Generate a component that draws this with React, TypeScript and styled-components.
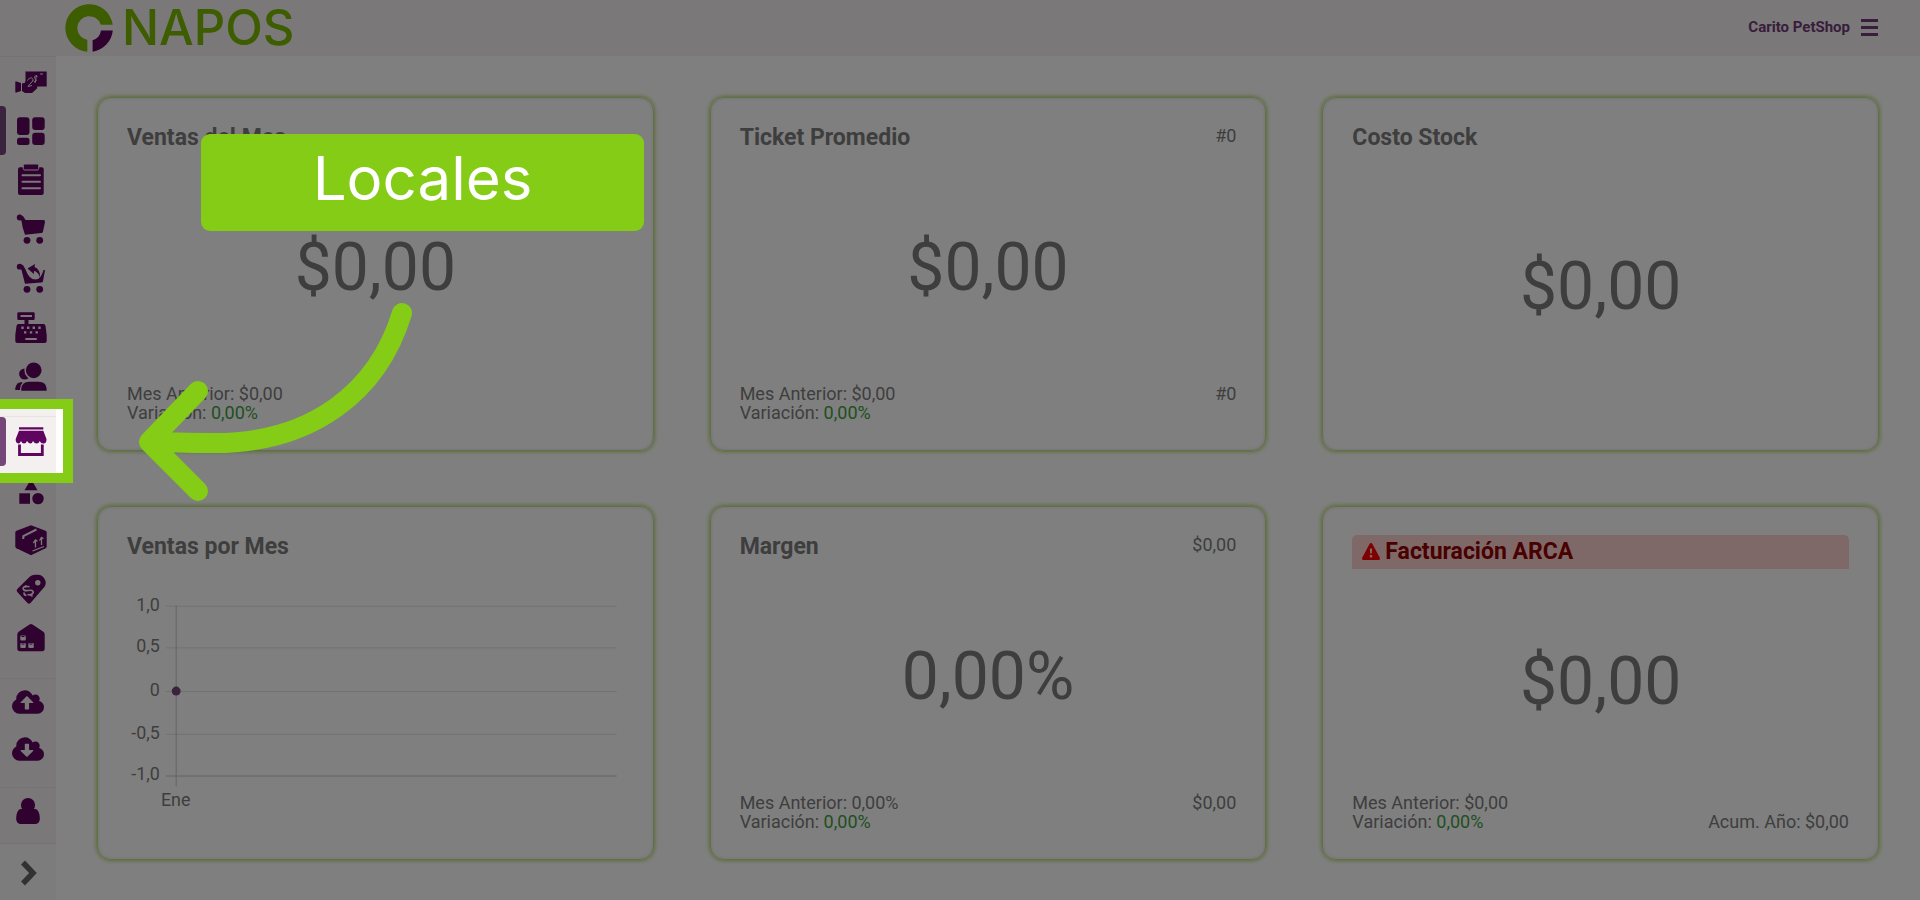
import React from "react";
import styled, { createGlobalStyle } from "styled-components";

const purple = "#5f0560";
const panel = "#f4f0f0";
const lime = "#84cc16";

const GlobalStyle = createGlobalStyle`
  * { box-sizing: border-box; }
  body { margin: 0; background: #fff; font-family: Roboto, "Open Sans", sans-serif; color: #7c7c7c; overflow-x: hidden; }
  h2, p { margin: 0; }
`;

const Page = styled.div`
  position: relative;
  display: flex;
  flex-direction: column;
  min-height: 100vh;
`;

const TopBar = styled.header`
  display: flex;
  align-items: center;
  justify-content: space-between;
  height: 56px;
  padding: 0 42px 0 64px;
  background: ${panel};
`;

const Brand = styled.a`
  display: flex;
  align-items: center;
  gap: 8px;
  color: #7cb800;
  font: 500 49px/56px Inter, sans-serif;
  text-decoration: none;
`;

const Account = styled.div`
  display: flex;
  align-items: center;
  gap: 11px;
  padding-bottom: 2px;
  color: #703c78;
  font-size: 15px;
  font-weight: 700;
`;

const IconButton = styled.button`
  display: flex;
  padding: 0;
  border: 0;
  background: none;
  color: inherit;
`;

const Body = styled.div`
  display: flex;
  flex: 1;
`;

const Sidebar = styled.nav`
  display: flex;
  flex-direction: column;
  flex: 0 0 56px;
  background: ${panel};
`;

const Group = styled.div<{ $gap?: number }>`
  padding-bottom: ${(p) => p.$gap ?? 16}px;
  border-top: 1px solid #e8e4e4;
`;

const NavItem = styled.a<{ $active?: boolean; $compact?: boolean }>`
  position: relative;
  display: flex;
  align-items: center;
  height: ${(p) => (p.$compact ? 47 : 49)}px;
  padding: ${(p) => (p.$compact ? "0 0 2px 12px" : "0 0 0 9px")};
  border-left: ${(p) => (p.$compact ? 0 : 6)}px solid transparent;
  color: ${purple};

  &::before {
    content: "";
    display: ${(p) => (p.$active ? "block" : "none")};
    position: absolute;
    left: -6px;
    top: 0;
    width: 6px;
    height: 49px;
    border-radius: 0 4px 4px 0;
    background: #754678;
  }
`;

const Expand = styled.button`
  display: flex;
  flex: 1;
  align-items: center;
  justify-content: center;
  min-height: 56px;
  padding: 2px 0 0 2px;
  border: 0;
  border-top: 1px solid #e8e4e4;
  background: #f8f8f8;
  color: #646464;
`;

const Dashboard = styled.main`
  display: grid;
  flex: 1;
  grid-template-columns: repeat(3, minmax(0, 1fr));
  grid-auto-rows: minmax(354px, auto);
  align-content: start;
  gap: 55px 56px;
  padding: 41px 41px 40px;
`;

const Card = styled.section`
  display: flex;
  flex-direction: column;
  padding: 28px 29px;
  border: 1px solid #c4e08c;
  border-radius: 14px;
  box-shadow: 0 0 5px #93c436, inset 0 0 4px #e4e4e4;
`;

const CardHead = styled.div`
  display: flex;
  justify-content: space-between;
  line-height: 22px;
`;

const CardTitle = styled.h2`
  font-size: 23px;
  line-height: 23px;
  font-weight: 700;
`;

const AlertHead = styled.div`
  display: flex;
  align-items: center;
  gap: 5px;
  height: 34px;
  padding: 0 10px 2px;
  border-radius: 5px 5px 0 0;
  background: #ffd0d0;
  color: #920000;
`;

const Side = styled.span`
  font-size: 18px;
  line-height: 20px;
`;

const Value = styled.p`
  display: flex;
  flex: 1;
  align-items: center;
  justify-content: center;
  padding-top: 2px;
  font-size: 66px;
  line-height: 66px;
`;

const CardFoot = styled.div<{ $end?: boolean }>`
  display: flex;
  justify-content: space-between;
  align-items: ${(p) => (p.$end ? "flex-end" : "flex-start")};
  font-size: 18px;
  line-height: 19px;
`;

const Change = styled.span`
  color: #3fa043;
`;

const Chart = styled.svg`
  width: 100%;
  height: 230px;
  margin-top: 32px;
  font-size: 18px;
  fill: #7c7c7c;
`;

/* The tour: dims the page and leaves one menu entry lit. */
const Spotlight = styled.span`
  position: absolute;
  z-index: 10;
  left: -32px;
  top: -18px;
  width: 99px;
  height: 84px;
  border: 10px solid ${lime};
  box-shadow: 0 0 0 4000px rgba(0, 0, 0, 0.5);
  pointer-events: none;
`;

const TourLabel = styled.div`
  position: absolute;
  z-index: 12;
  left: 201px;
  top: 134px;
  width: 443px;
  height: 97px;
  border-radius: 9px;
  background: ${lime};
  color: #fff;
  font: 400 60px/88px Inter, sans-serif;
  text-align: center;
`;

const TourArrow = styled.svg`
  position: absolute;
  z-index: 11;
  left: 130px;
  top: 300px;
`;

const Glyph = ({ children }: { children: React.ReactNode }) => (
  <svg width="32" height="32" viewBox="0 0 32 32" fill="currentColor" aria-hidden="true">
    {children}
  </svg>
);

const icons: Record<string, React.ReactNode> = {
  cobrar: (
    <>
      <path d="M10 5.500h21.700v15H22l-3 3H10z" />
      <path d="M.3 15.500h1.200L6 17v8l-4.500 1.500H.3z" />
      <path d="M7 17.500l4-1 4-4 8 2-1 8-5 4.500h-7l-3-2z" />
      <path d="M6.500 16v10M10 5.500v10l-4 1.500" fill="none" stroke={panel} strokeWidth="1" />
      <path d="M12.500 14.500c1.500-3 5-3.500 5.500-1 .3 2-4 5-5 7l4-1M22.500 10.500c-3-1.500-4 .5-2 2.500 2 1.500 0 3.500-2 2M21.500 9l-1.500 8" fill="none" stroke={panel} strokeWidth="1" />
      <path d="M25 8h3" stroke={panel} strokeWidth="1" />
    </>
  ),
  panel: (
    <>
      <rect x="2" y="2.200" width="12.500" height="17.800" rx="3" />
      <rect x="2" y="22.700" width="12.500" height="7.300" rx="2.500" />
      <rect x="17.200" y="2.200" width="12.500" height="12.700" rx="3" />
      <rect x="17.200" y="17.800" width="12.500" height="12.200" rx="3" />
    </>
  ),
  pedidos: (
    <>
      <rect x="3" y="3.300" width="25.700" height="27.700" rx="2" />
      <rect x="8.300" y="0" width="15.400" height="6" rx="1.500" stroke={panel} strokeWidth="1" />
      <path d="M7.500 11.200h17.500M7.500 17.700h17.500M7.500 24.200h17.500" stroke={panel} strokeWidth="2" strokeLinecap="round" />
    </>
  ),
  carrito: (
    <>
      <circle cx="4.700" cy="4.500" r="2.900" />
      <path d="M4 4l4-1 2.500 4H28.500q1.700.2 1.500 2L28 18.500q-.3 1.500-1.700 1.600L10 21.700Q7 14 6.500 8z" />
      <circle cx="12" cy="27.300" r="3.400" />
      <circle cx="24.700" cy="27.300" r="3.400" />
    </>
  ),
  devolucion: (
    <>
      <circle cx="4.700" cy="4.700" r="2.900" />
      <path d="M4 4l4-1 2.500 4.500q3.500 10 10 10 5.500 0 8-9.500h1.500L28 19q-.3 1.500-1.700 1.600L10 21.700Q8 14 6.500 8z" />
      <path d="M12.500 6.500l7.500-4.500-.5 3q6 2.500 5.500 10.500-2-6-6-6.500l-.2 3z" />
      <circle cx="12" cy="27.300" r="3.400" />
      <circle cx="24.700" cy="27.300" r="3.400" />
    </>
  ),
  caja: (
    <>
      <path d="M3.500 1.300h15q1.200 0 1.200 1.200v5.300q0 1.200-1.200 1.200h-5V13h15q1.800 0 2 2l1.200 9v6q0 2-2 2H2.300q-2 0-2-2v-6l1.200-9q.2-2 2-2h6V9h-6q-1.200 0-1.200-1.200V2.500q0-1.200 1.200-1.200z" />
      <path d="M5.500 5h11.500M10.300 28h11.500" stroke={panel} strokeWidth="2" />
      <path d="M6.300 16.700h2.400M12 16.700h2.400M17.600 16.700h2.400M23.300 16.700h2.400M9 21.400h2.400M14.800 21.400h2.400M20.500 21.400h2.400" stroke={panel} strokeWidth="2.400" />
    </>
  ),
  clientes: (
    <>
      <circle cx="9.700" cy="14" r="5.600" />
      <path d="M.3 30v-2q1-6 7-6v8z" />
      <circle cx="18.700" cy="10.300" r="8.600" stroke={panel} strokeWidth="1.500" />
      <path d="M5.700 31.300v-3q1-7.200 8-7.200h10q8 0 8.500 7.200v3z" stroke={panel} strokeWidth="1.200" />
    </>
  ),
  locales: (
    <>
      <path d="M4 1.300h24.300v2.300H4zM4 4.700h24.300L31.500 13q0 4.500-3 4.500T24.800 15q-1 2.500-3.200 2.500T18 15q-1 2.500-2.500 2.500T12 15q-1 2.500-3 2.500T6 15q-1 2.500-2.700 2.500Q.5 17 .7 13z" />
      <path d="M4.500 18.500v10h22.800v-10" fill="none" stroke="currentColor" strokeWidth="2.800" />
    </>
  ),
  categorias: (
    <>
      <path d="M16 4l6.500 11.200H9.500z" />
      <rect x="4.300" y="18.300" width="10.700" height="10.500" />
      <circle cx="23" cy="23.600" r="5.700" />
    </>
  ),
  productos: (
    <>
      <path d="M16 1.200l14.500 5.500q1.200.5 1.200 1.800v14q0 1.200-1.200 1.800L16 31.200 1.500 24.300Q.3 23.700.3 22.500v-14q0-1.300 1.200-1.800z" />
      <path d="M8.300 15v-3L21.500 5.500" fill="none" stroke={panel} strokeWidth="2" />
      <path d="M17.500 27l11.500-4.500M20.500 23.500V17M18.300 19l2.200-3 2 1.300M26.500 21v-6.500M24.500 16.500l2-3 2 1.300" fill="none" stroke={panel} strokeWidth="1.300" />
    </>
  ),
  precios: (
    <>
      <path d="M2.300 16L15 3.500q2-1.700 5-1.700h3q4.500 0 7 5 1.700 3.500-.5 7L15.500 30q-1.500 1.500-3 0L2.300 19q-1.400-1.500 0-3z" />
      <circle cx="22.800" cy="9.700" r="2.700" fill={panel} />
      <path d="M14.500 13.800q-4.800-1.500-6.300 1.200-.5 3 4.800 2.500 5.500-1 5.200 2.200-1.500 3-5.700 1.800M10 12.500l1.500 2M15.500 21.500l2 2M9 19.500q0 3 2.500 3" fill="none" stroke={panel} strokeWidth="1.700" />
    </>
  ),
  deposito: (
    <>
      <path d="M14.500 2.500q1.500-1.200 3 0L28 9.500q1.700 1 1.700 3v14q0 2.700-2.700 2.700H5q-2.700 0-2.700-2.700v-14q0-2 1.700-3z" />
      <g fill={panel}>
        <rect x="5.300" y="13.500" width="5.500" height="5" rx="1" />
        <rect x="5.300" y="21" width="5.500" height="5" rx="1" />
        <rect x="13.300" y="21" width="5.500" height="5" rx="1" />
      </g>
      <path d="M6.500 14.500h3M6.500 22h3M14.500 22h3" stroke="currentColor" strokeWidth="1" />
    </>
  ),
};

const cloudShape =
  "M1920 1152q0 159-112.500 271.500t-271.500 112.500h-1088q-185 0-316.500-131.500t-131.500-316.500q0-130 70-240t188-165q-2-30-2-43q0-212 150-362t362-150q156 0 285.500 87t188.500 231q71-62 166-62q106 0 181 75t75 181q0 76-41 138q130 31 213.500 135.500t83.500 238.500z";
const arrowUp =
  "M1280 864q0-14-9-23l-352-352q-9-9-23-9t-23 9l-351 351q-10 12-10 24q0 14 9 23t23 9h224v352q0 13 9.500 22.500t22.500 9.500h192q13 0 22.500-9.500t9.500-22.500v-352h224q13 0 22.500-9.500t9.500-22.500z";
const arrowDown =
  "M1280 928q0-14-9-23t-23-9h-224v-352q0-13-9.500-22.500t-22.500-9.500h-192q-13 0-22.500 9.500t-9.500 22.500v352h-224q-13 0-22.500 9.500t-9.500 22.500q0 14 9 23l352 352q9 9 23 9t23-9l351-351q10-12 10-24z";

const Cloud = ({ arrow }: { arrow: string }) => (
  <svg width="32" height="24" viewBox="0 112 1920 1440" fill="currentColor" fillRule="evenodd" aria-hidden="true">
    <path d={cloudShape + arrow} />
  </svg>
);

const User = () => (
  <svg width="32" height="26" viewBox="0 256 1280 1408" fill="currentColor" aria-hidden="true">
    <path d="M1280 1399q0 109-62.500 187t-150.500 78h-854q-88 0-150.500-78t-62.500-187q0-85 8.500-160.500t31.500-152t58.500-131t94-89t134.500-34.500q131 128 313 128t313-128q76 0 134.500 34.500t94 89t58.500 131t31.500 152t8.500 160.500zM1024 640q0 159-112.500 271.500t-271.500 112.500t-271.500-112.500t-112.500-271.500t112.500-271.500t271.500-112.500t271.500 112.500t112.500 271.500z" />
  </svg>
);

const Mark = () => (
  <svg width="50" height="50" viewBox="64 3.500 50 50" aria-hidden="true">
    <path d="M112.700 25.300A23.800 23.800 0 1 0 87.300 52.200V40.500A12 12 0 1 1 100.800 25.300z" fill="#7cb800" />
    <path d="M112.800 31A23.800 23.800 0 0 1 92.600 52.200V40.700A12 12 0 0 0 101 31z" fill={purple} />
  </svg>
);

const mainItems = [
  ["cobrar", "Cobrar"],
  ["panel", "Panel"],
  ["pedidos", "Pedidos"],
  ["carrito", "Ventas"],
  ["devolucion", "Devoluciones"],
  ["caja", "Caja"],
  ["clientes", "Clientes"],
];

const stockItems = [
  ["locales", "Locales"],
  ["categorias", "Categorías"],
  ["productos", "Productos"],
  ["precios", "Precios"],
  ["deposito", "Depósito"],
];

const Summary = ({ previous }: { previous: string }) => (
  <div>
    <p>Mes Anterior: {previous}</p>
    <p>
      Variación: <Change>0,00%</Change>
    </p>
  </div>
);

const gridLines = [
  { y: 15, label: "1,0" },
  { y: 57, label: "0,5" },
  { y: 101, label: "0" },
  { y: 144, label: "-0,5" },
  { y: 186, label: "-1,0" },
];

const MonthChart = () => (
  <Chart viewBox="0 0 500 230" preserveAspectRatio="xMinYMid" role="img" aria-label="Ventas por Mes">
    {gridLines.map((g) => (
      <g key={g.label}>
        <path d={`M39 ${g.y + 0.5}H493`} stroke={g.label === "-1,0" ? "#c4c4c4" : "#e2e2e2"} />
        <text x="33" y={g.y + 5} textAnchor="end">
          {g.label}
        </text>
      </g>
    ))}
    <path d="M49.500 15V197" stroke="#c4c4c4" />
    <circle cx="49.500" cy="101" r="4.500" fill="#754678" />
    <text x="49" y="217" textAnchor="middle">
      Ene
    </text>
  </Chart>
);

export default function App() {
  return (
    <Page>
      <GlobalStyle />
      <TopBar>
        <Brand href="#">
          <Mark />
          NAPOS
        </Brand>
        <Account>
          Carito PetShop
          <IconButton aria-label="Menú">
            <svg width="17" height="17" viewBox="0 0 17 17" fill="currentColor">
              <path d="M0 0h17v3H0zM0 7h17v3H0zM0 14h17v3H0z" />
            </svg>
          </IconButton>
        </Account>
      </TopBar>
      <Body>
        <Sidebar>
          <Group>
            {mainItems.map(([id, name]) => (
              <NavItem key={id} href={"#" + id} aria-label={name} $active={id === "panel"}>
                <Glyph>{icons[id]}</Glyph>
              </NavItem>
            ))}
          </Group>
          <Group>
            {stockItems.map(([id, name]) => (
              <NavItem key={id} href={"#" + id} aria-label={name} $active={id === "locales"}>
                <Glyph>{icons[id]}</Glyph>
                {id === "locales" && <Spotlight />}
              </NavItem>
            ))}
          </Group>
          <Group $gap={14}>
            <NavItem href="#subir" aria-label="Subir" $compact>
              <Cloud arrow={arrowUp} />
            </NavItem>
            <NavItem href="#bajar" aria-label="Bajar" $compact>
              <Cloud arrow={arrowDown} />
            </NavItem>
          </Group>
          <Group $gap={8}>
            <NavItem href="#usuario" aria-label="Usuario" $compact>
              <User />
            </NavItem>
          </Group>
          <Expand aria-label="Expandir menú">
            <svg width="18" height="26" viewBox="0 0 18 26" fill="none" stroke="currentColor" strokeWidth="5.500">
              <path d="M3 2.500L13 13 3 23.500" />
            </svg>
          </Expand>
        </Sidebar>
        <Dashboard>
          <Card>
            <CardHead>
              <CardTitle>Ventas del Mes</CardTitle>
            </CardHead>
            <Value>$0,00</Value>
            <CardFoot>
              <Summary previous="$0,00" />
            </CardFoot>
          </Card>
          <Card>
            <CardHead>
              <CardTitle>Ticket Promedio</CardTitle>
              <Side>#0</Side>
            </CardHead>
            <Value>$0,00</Value>
            <CardFoot>
              <Summary previous="$0,00" />
              <span>#0</span>
            </CardFoot>
          </Card>
          <Card>
            <CardHead>
              <CardTitle>Costo Stock</CardTitle>
            </CardHead>
            <Value>$0,00</Value>
          </Card>
          <Card>
            <CardHead>
              <CardTitle>Ventas por Mes</CardTitle>
            </CardHead>
            <MonthChart />
          </Card>
          <Card>
            <CardHead>
              <CardTitle>Margen</CardTitle>
              <Side>$0,00</Side>
            </CardHead>
            <Value>0,00%</Value>
            <CardFoot>
              <Summary previous="0,00%" />
              <span>$0,00</span>
            </CardFoot>
          </Card>
          <Card>
            <AlertHead>
              <svg width="18" height="17" viewBox="0 0 18 17" aria-hidden="true">
                <path d="M9 0q.8 0 1.300.8l7.400 13.700q.9 2.200-1.200 2.500h-15q-2.100-.3-1.200-2.500L7.700.8Q8.200 0 9 0zM7.800 5.500l.4 5h1.600l.4-5zM7.800 12v2.400h2.400V12z" fill="#ff0000" fillRule="evenodd" />
              </svg>
              <CardTitle>Facturación ARCA</CardTitle>
            </AlertHead>
            <Value>$0,00</Value>
            <CardFoot $end>
              <Summary previous="$0,00" />
              <span>Acum. Año: $0,00</span>
            </CardFoot>
          </Card>
        </Dashboard>
      </Body>
      <TourArrow width="290" height="210" viewBox="130 300 290 210" fill="none" stroke={lime} strokeWidth="20" strokeLinecap="round" strokeLinejoin="round" aria-hidden="true">
        <path d="M402 313C378 392 312 443 215 443Q175 443 150 441M198 391L149 442 198 491" />
      </TourArrow>
      <TourLabel>Locales</TourLabel>
    </Page>
  );
}
